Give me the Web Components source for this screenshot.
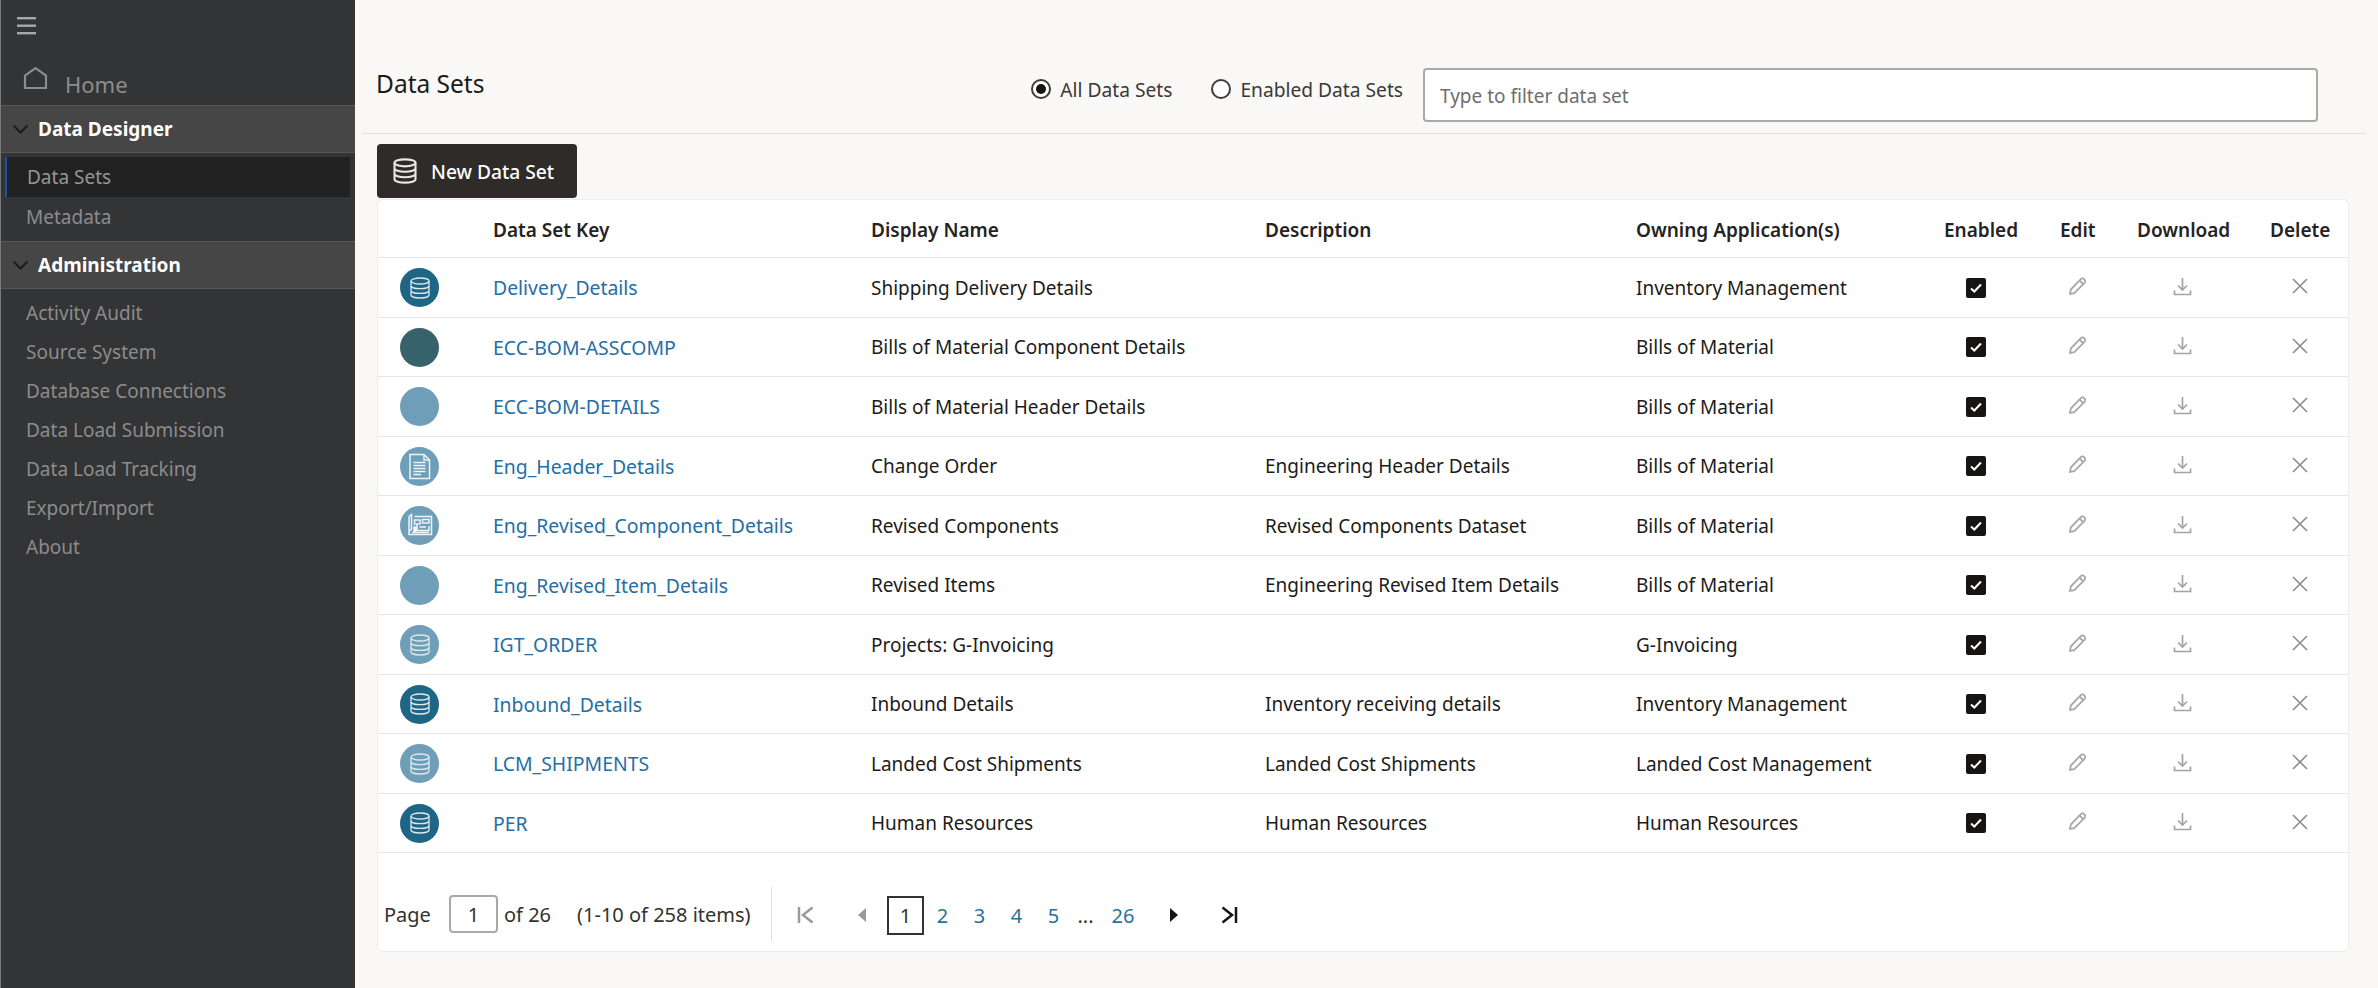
<!DOCTYPE html>
<html lang="en"><head><meta charset="utf-8"><title>Data Sets</title>
<style>
html,body{margin:0;height:100%}
body{font-family:"Noto Sans","Liberation Sans",sans-serif;font-size:19px;background:#f9f8f6;color:#1c1b19;overflow:hidden}
</style></head><body>
<ds-app>
  <ds-sidebar slot="side">
    <ds-nav-group label="Data Designer">
      <ds-nav-item active>Data Sets</ds-nav-item>
      <ds-nav-item>Metadata</ds-nav-item>
    </ds-nav-group>
    <ds-nav-group label="Administration" roomy>
      <ds-nav-item>Activity Audit</ds-nav-item>
      <ds-nav-item>Source System</ds-nav-item>
      <ds-nav-item>Database Connections</ds-nav-item>
      <ds-nav-item>Data Load Submission</ds-nav-item>
      <ds-nav-item>Data Load Tracking</ds-nav-item>
      <ds-nav-item>Export/Import</ds-nav-item>
      <ds-nav-item>About</ds-nav-item>
    </ds-nav-group>
  </ds-sidebar>
  <ds-toolbar></ds-toolbar>
  <ds-button>New Data Set</ds-button>
  <ds-table></ds-table>
</ds-app>
<script>
const def=(name,html,setup)=>customElements.define(name,class extends HTMLElement{
  constructor(){super();const r=this.attachShadow({mode:"open"});r.innerHTML=typeof html==="function"?html(this):html;}
  connectedCallback(){if(setup&&!this._d){this._d=1;setup(this,this.shadowRoot);}}
});
const DB=(c,w=26,s=1.6)=>`<svg width="${w}" height="${w}" viewBox="0 0 24 24" fill="none" stroke="${c}" stroke-width="${s}"><ellipse cx="12" cy="5" rx="9" ry="3"/><path d="M3 5v14c0 1.700 4 3 9 3s9-1.300 9-3V5M3 9.700c0 1.700 4 3 9 3s9-1.300 9-3M3 14.400c0 1.700 4 3 9 3s9-1.300 9-3"/></svg>`;

def("ds-app",`<style>
:host{display:flex;height:100vh;width:100%}
main{flex:1;min-width:0;display:flex;flex-direction:column;padding-right:29px;box-sizing:border-box}
</style><slot name="side"></slot><main><slot></slot></main>`);

def("ds-sidebar",`<style>
:host{display:block;flex:none;width:355px;box-sizing:border-box;border-left:1px solid #77787a;background:#333436;color:#8c8c8c}
.burger{display:block;padding:15px 0 0 16px;height:33px}
.home{display:flex;align-items:flex-end;height:57px;box-sizing:border-box;padding:0 0 6px 22px;gap:17px;font-size:22px;line-height:30px}
.home svg{margin-bottom:9px}
</style>
<div class="burger"><svg width="19" height="18" viewBox="0 0 19 18" fill="#a8a8a8"><rect y="0" width="19" height="2.400"/><rect y="7.500" width="19" height="2.400"/><rect y="15" width="19" height="2.400"/></svg></div>
<div class="home"><svg width="25" height="24" viewBox="0 0 25 24" fill="none" stroke="#8c8c8c" stroke-width="2.200"><path d="M2 22V9.500L12.500 2 23 9.500V22Z"/></svg><span>Home</span></div>
<slot></slot>`);

def("ds-nav-group",h=>`<style>
:host{display:block}
.head{display:flex;align-items:center;height:48px;box-sizing:border-box;background:#464646;border-top:1px solid #565656;border-bottom:1px solid #565656;color:#fff;font-weight:700;font-size:19px;padding-left:11px;gap:9px}
.list{display:flex;flex-direction:column;padding:${h.hasAttribute("roomy")?"4px 0 0":"4px 0 5px"}}
</style><div class="head"><svg width="17" height="10" viewBox="0 0 17 10" fill="none" stroke="#1e1e1e" stroke-width="2.200"><path d="M1.500 1.500 8.500 8.500 15.500 1.500"/></svg><span>${h.getAttribute("label")}</span></div><div class="list"><slot></slot></div>`);

def("ds-nav-item",h=>`<style>
:host{display:flex;align-items:center;height:39px;font-size:19px;padding-left:25px;color:#8c8c8c}
:host([active]){height:40px;margin:0 5px 0 4px;padding-left:20px;background:#212121;border-left:2px solid #1f4fa8;color:#979797}
</style><slot></slot>`);

def("ds-radio",h=>`<style>
:host{display:inline-flex;align-items:center;gap:9px;font-size:19.200px;color:#3a3936;white-space:nowrap}
i{display:flex;align-items:center;justify-content:center;width:20px;height:20px;box-sizing:border-box;border:2px solid #3c3c3c;border-radius:50%;background:#fff}
b{width:10px;height:10px;border-radius:50%;background:#161513}
</style><i>${h.hasAttribute("checked")?"<b></b>":""}</i><slot></slot>`);

def("ds-toolbar",`<style>
:host{display:flex;flex:none;height:134px;box-sizing:border-box;margin:0 -17px 0 7px;padding:0 48px 0 14px;border-bottom:1px solid #e4e3e1;align-items:flex-start}
h1{margin:0;flex:1;padding-top:65px;font-size:24.500px;font-weight:400;line-height:38px;color:#1c1b19}
.radios{display:flex;gap:39px;padding-top:74px;height:30px;align-items:center;margin-right:20px}
input{display:block;margin-top:68px;width:895px;height:54px;box-sizing:border-box;border:2px solid #aaa9a6;border-radius:4px;background:#fff;padding:2px 15px 0;font:19px "Noto Sans","Liberation Sans",sans-serif;color:#333}
input::placeholder{color:#6f6e6b;opacity:1}
</style><h1>Data Sets</h1>
<div class="radios"><ds-radio checked>All Data Sets</ds-radio><ds-radio>Enabled Data Sets</ds-radio></div>
<input placeholder="Type to filter data set">`);

def("ds-button",`<style>
:host{display:inline-flex;align-self:flex-start;align-items:center;gap:12px;margin:10px 0 1px 22px;height:54px;width:200px;box-sizing:border-box;padding-left:14px;background:#2f2b28;border-radius:4px;color:#fff;font-size:19.200px;font-weight:500;white-space:nowrap}
</style>${DB("#e8e8e8",28,1.8)}<slot></slot>`);

const DOC=`<svg width="23" height="27" viewBox="0 0 23 27" fill="none" stroke="#eef4f7" stroke-width="1.500"><path d="M2 1.500H16L21.500 7V25.500H2Z"/><path d="M16 1.500V7H21.500"/><path d="M5.500 9.500H17.500M5.500 12.500H17.500M5.500 15.500H17.500M5.500 18.500H17.500M5.500 21.500H13"/></svg>`;
const PLAN=`<svg width="27" height="25" viewBox="0 0 27 25" fill="none" stroke="#eef4f7" stroke-width="1.500"><path d="M3 3.500 5.500 1.500V17M3 3.500V21.500H25.500V3.500H8.500M5.500 17C4 17 3 18 3 19.500"/><path d="M8.500 7H14V11H8.500ZM11 11V17.500H23V13M16.500 6.500H23V10H16.500ZM8 14H9.500V18H8ZM13.500 14H20M6 19.500H23"/></svg>`;
def("ds-avatar",h=>{const c=h.getAttribute("color"),k=h.getAttribute("kind");
 const g=k==="db"?DB("#dce9ef",24,1.3):k==="doc"?DOC:k==="plan"?PLAN:"";
 return `<style>:host{display:flex;width:39px;height:39px;border-radius:50%;align-items:center;justify-content:center;background:${c}}</style>${g}`;});

const dark="#1f6585",teal="#38626b",light="#6f9fb8";
const rows=[
["db",dark,"Delivery_Details","Shipping Delivery Details","","Inventory Management"],
["",teal,"ECC-BOM-ASSCOMP","Bills of Material Component Details","","Bills of Material"],
["",light,"ECC-BOM-DETAILS","Bills of Material Header Details","","Bills of Material"],
["doc",light,"Eng_Header_Details","Change Order","Engineering Header Details","Bills of Material"],
["plan",light,"Eng_Revised_Component_Details","Revised Components","Revised Components Dataset","Bills of Material"],
["",light,"Eng_Revised_Item_Details","Revised Items","Engineering Revised Item Details","Bills of Material"],
["db",light,"IGT_ORDER","Projects: G-Invoicing","","G-Invoicing"],
["db",dark,"Inbound_Details","Inbound Details","Inventory receiving details","Inventory Management"],
["db",light,"LCM_SHIPMENTS","Landed Cost Shipments","Landed Cost Shipments","Landed Cost Management"],
["db",dark,"PER","Human Resources","Human Resources","Human Resources"]];

const COLS="grid-template-columns:115px 378px 394px 371px 308px 116px 77px 133px 1fr";
const PEN=`<svg width="19" height="19" viewBox="0 0 19 19" fill="none" stroke="#a8a8a8" stroke-width="1.800"><path d="M2 17 2.800 12.500 12.800 2.200C13.800 1.200 15.300 1.200 16.400 2.300 17.500 3.400 17.500 4.900 16.500 5.900L6.300 16.200Z"/><path d="M11.500 3.500 15.200 7.200"/></svg>`;
const DL=`<svg width="19" height="19" viewBox="0 0 19 19" fill="none" stroke="#a3a3a3" stroke-width="1.700"><path d="M9.500 1V12.500M5 8.500 9.500 13 14 8.500M1.500 13.500V17.500H17.500V13.500"/></svg>`;
const X=`<svg width="16" height="16" viewBox="0 0 16 16" fill="none" stroke="#8f8f8f" stroke-width="1.700"><path d="M1 1 15 15M15 1 1 15"/></svg>`;

def("ds-table-head",`<style>
:host{display:grid;${COLS};height:58px;box-sizing:border-box;padding-top:2px;border-bottom:1px solid #e6e6e6;align-items:center;font-weight:600;font-size:19px;color:#24231f;white-space:nowrap}
</style><span></span><span>Data Set Key</span><span>Display Name</span><span>Description</span><span>Owning Application(s)</span><span>Enabled</span><span>Edit</span><span>Download</span><span>Delete</span>`);

def("ds-row",h=>{const r=rows[+h.getAttribute("i")];return `<style>
:host{display:grid;${COLS};height:59.500px;box-sizing:border-box;padding-top:1px;border-bottom:1px solid #e6e6e6;align-items:center;font-size:19px;color:#1c1b19;white-space:nowrap}
.av{padding-left:22px}
a{color:#256ea6;text-decoration:none;font-size:19.400px}
.c{display:flex;justify-content:center}
.c svg{margin-top:-3px}
.chk{display:flex;align-items:center;justify-content:center;width:20px;height:20px;background:#161513;border-radius:2px}
.chk svg{margin:0}
</style><div class="av"><ds-avatar kind="${r[0]}" color="${r[1]}"></ds-avatar></div>
<a href="#">${r[2]}</a><span>${r[3]}</span><span>${r[4]}</span><span>${r[5]}</span>
<div class="c" style="width:64px"><span class="chk"><svg width="12" height="10" viewBox="0 0 12 10" fill="none" stroke="#fff" stroke-width="2"><path d="M1 5.500 4.300 8.500 11 1.500"/></svg></span></div>
<div class="c" style="width:34px">${PEN}</div><div class="c" style="width:90px">${DL}</div><div class="c" style="width:60px">${X}</div>`});

def("ds-pager",`<style>
:host{display:flex;align-items:center;height:98px;box-sizing:border-box;padding:24px 0 0 6px;font-size:20px;color:#33322f;white-space:nowrap}
.in{display:flex;align-items:center;justify-content:center;width:49px;height:38px;box-sizing:border-box;border:2px solid #aaa9a6;border-radius:4px;margin-right:6px}
.page{width:65px}.of{width:73px}.count{width:194px}
.sep{width:1px;height:54px;background:#dededc;margin-right:25px}
.n{display:flex;align-items:center;justify-content:center;width:37px;height:39px;box-sizing:border-box;color:#2a7199;margin-top:2px}
.cur{border:2px solid #33322f;color:#333}
.ic{display:flex;align-items:center;justify-content:center;margin-top:2px}
</style>
<span class="page">Page</span><span class="in">1</span><span class="of">of 26</span><span class="count">(1-10 of 258 items)</span><span class="sep"></span>
<span class="ic" style="width:17px;margin-right:43px"><svg width="17" height="18" viewBox="0 0 17 18" fill="none" stroke="#9a9a9a" stroke-width="2.500"><path d="M2 1V17M15.500 1.500 6 9 15.500 16.500"/></svg></span>
<span class="ic" style="width:10px;margin-right:20px"><svg width="10" height="14" viewBox="0 0 10 14" fill="#9a9a9a"><path d="M9 0V14L1 7Z"/></svg></span>
<span class="n cur">1</span><span class="n">2</span><span class="n">3</span><span class="n">4</span><span class="n">5</span>
<span class="n" style="width:27px;color:#33322f">...</span><span class="n" style="width:48px">26</span>
<span class="ic" style="width:10px;margin:2px 42px 0 22px"><svg width="10" height="14" viewBox="0 0 10 14" fill="#161513"><path d="M1 0V14L9 7Z"/></svg></span>
<span class="ic" style="width:17px"><svg width="17" height="18" viewBox="0 0 17 18" fill="none" stroke="#161513" stroke-width="2.500"><path d="M15 1V17M1.500 1.500 11 9 1.500 16.500"/></svg></span>`);

def("ds-table",`<style>
:host{display:block;margin-left:22px;box-sizing:border-box;background:#fff;border:1px solid #ececea;border-radius:6px}
</style><ds-table-head></ds-table-head>${rows.map((_,i)=>`<ds-row i="${i}"></ds-row>`).join("")}<ds-pager></ds-pager>`);
</script>
</body></html>
